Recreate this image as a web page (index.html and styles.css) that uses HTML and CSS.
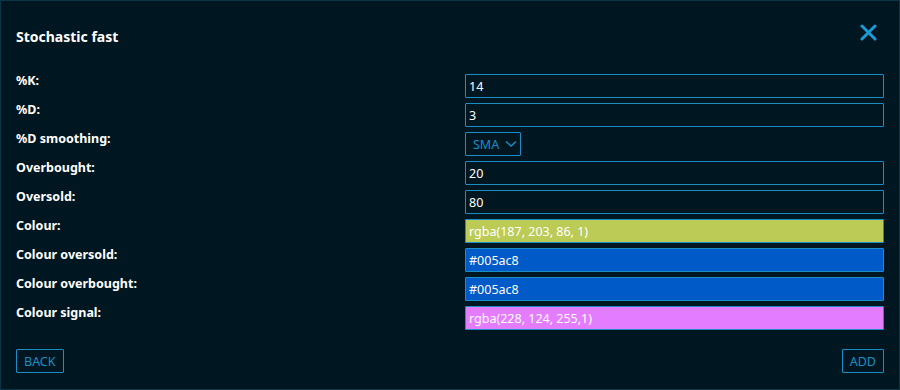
FILE: index.html
```html
<!DOCTYPE html>
<html lang="en">
<head>
  <meta charset="UTF-8" />
  <meta name="viewport" content="width=device-width, initial-scale=1" />
  <title>Stochastic fast</title>
  <link rel="stylesheet" href="styles.css">
</head>
<body>
  <div class="dialog">
    <div class="header">
      <h1>Stochastic fast</h1>
      <button class="close" aria-label="Close">
        <svg width="17" height="17" viewBox="0 0 17 17">
          <path d="M2 2 L15 15 M15 2 L2 15" stroke="#1a9ad6" stroke-width="3" stroke-linecap="round" fill="none"/>
        </svg>
      </button>
    </div>

    <div class="form">
      <div class="row">
        <label>%K:</label>
        <input class="field" type="text" value="14">
      </div>
      <div class="row">
        <label>%D:</label>
        <input class="field" type="text" value="3">
      </div>
      <div class="row">
        <label>%D smoothing:</label>
        <div class="select">SMA
          <svg width="12" height="8" viewBox="0 0 12 8">
            <path d="M1 1.5 L6 6 L11 1.5" stroke="#1a8fc5" stroke-width="1.4" fill="none"/>
          </svg>
        </div>
      </div>
      <div class="row">
        <label>Overbought:</label>
        <input class="field" type="text" value="20">
      </div>
      <div class="row">
        <label>Oversold:</label>
        <input class="field" type="text" value="80">
      </div>
      <div class="row">
        <label>Colour:</label>
        <input class="field" type="text" value="rgba(187, 203, 86, 1)" style="background: rgba(187, 203, 86, 1)">
      </div>
      <div class="row">
        <label>Colour oversold:</label>
        <input class="field" type="text" value="#005ac8" style="background: #005ac8">
      </div>
      <div class="row">
        <label>Colour overbought:</label>
        <input class="field" type="text" value="#005ac8" style="background: #005ac8">
      </div>
      <div class="row">
        <label>Colour signal:</label>
        <input class="field" type="text" value="rgba(228, 124, 255,1)" style="background: rgba(228, 124, 255,1)">
      </div>
    </div>

    <div class="footer">
      <button class="btn">BACK</button>
      <button class="btn">ADD</button>
    </div>
  </div>
</body>
</html>
```

FILE: styles.css
```css
* {
  box-sizing: border-box;
}
body {
  margin: 0;
  background: #001620;
  font-family: 'Noto Sans', 'Liberation Sans', sans-serif;
  color: #fff;
}
.dialog {
  width: 900px;
  height: 390px;
  border: 1px solid #0b3446;
  background: #001620;
  padding: 0 15px;
  display: flex;
  flex-direction: column;
}
.header {
  display: flex;
  justify-content: space-between;
  align-items: flex-start;
  height: 70px;
}
h1 {
  margin: 26px 0 0;
  font-size: 14px;
  font-weight: bold;
}
.close {
  background: none;
  border: none;
  padding: 0;
  margin: 23px 7px 0 0;
  cursor: pointer;
  display: flex;
}
.form {
  display: flex;
  flex-direction: column;
  gap: 5px;
  margin-top: 3px;
}
.row {
  display: grid;
  grid-template-columns: 449px 419px;
  height: 24px;
}
.row label {
  font-size: 12.5px;
  font-weight: bold;
  line-height: 14px;
}
.field {
  width: 419px;
  height: 24px;
  border: 1px solid #1a8fc5;
  border-radius: 1px;
  background: #001620;
  color: #fff;
  font-family: inherit;
  font-size: 12.5px;
  padding: 0 3px;
  outline: none;
}
.select {
  width: 56px;
  height: 24px;
  border: 1px solid #1a8fc5;
  border-radius: 1px;
  color: #1a8fc5;
  font-size: 12.5px;
  display: flex;
  align-items: center;
  gap: 6px;
  padding-left: 7px;
}
.footer {
  display: flex;
  justify-content: space-between;
  margin-top: auto;
  margin-bottom: 16px;
}
.btn {
  background: none;
  border: 1px solid #1a8fc5;
  border-radius: 1px;
  color: #1a8fc5;
  font-family: inherit;
  font-size: 12.5px;
  height: 24px;
  padding: 0 7px;
  cursor: pointer;
}
```
